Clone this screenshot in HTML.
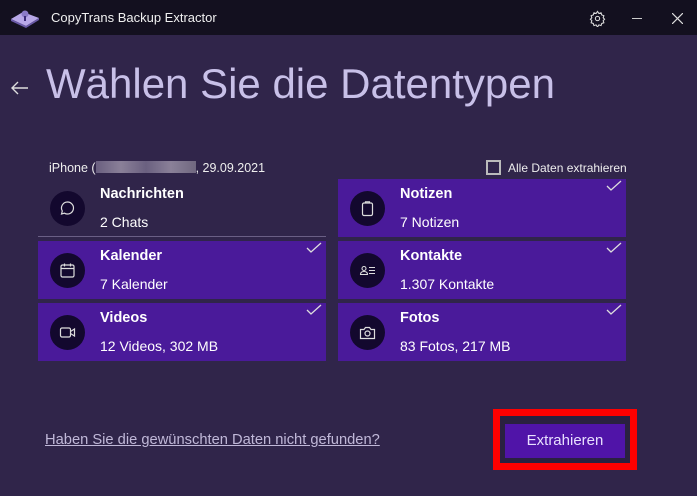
<!DOCTYPE html>
<html><head><style>
*{margin:0;padding:0;box-sizing:border-box}
body{width:697px;height:496px;background:#30254a;font-family:"Liberation Sans","DejaVu Sans",sans-serif;position:relative;overflow:hidden;color:#fff}
.tb{position:absolute;left:0;top:0;width:697px;height:35px;background:#13101f}
.abs{position:absolute}
.card{position:absolute;width:288px;height:58px;background:#4a1a9a}
.card.un{background:transparent;border-bottom:1px solid #6a5f85}
.ic{position:absolute;left:12px;top:12px;width:35px;height:35px;border-radius:50%;background:#13082e}
.ic svg{position:absolute;left:9px;top:9px}
.t{position:absolute;left:62px;top:7px;font-weight:bold;font-size:14.5px}
.s{position:absolute;left:62px;top:35px;font-size:14px}
.ck{position:absolute;right:4px;top:1px}
</style></head><body>
<div class="tb">
<svg class="abs" style="left:9px;top:8px" width="32" height="20" viewBox="0 0 32 20"><path d="M2 11 L14 4 L30 10 L17 18 Z" fill="#b8a8e8"/><path d="M2 11 L17 18 L30 10 L30 12 L17 20 L2 13Z" fill="#6a5aa8"/><circle cx="16" cy="6" r="3.5" fill="#8a7ac8"/><rect x="15" y="8" width="2" height="5" fill="#3a2a78"/></svg>
<div class="abs" style="left:51px;top:10px;font-size:13px;color:#f0f0f0">CopyTrans Backup Extractor</div>
<svg class="abs" style="left:589px;top:10px" width="17" height="17" viewBox="0 0 24 24" fill="none" stroke="#ddd" stroke-width="1.5"><circle cx="12" cy="12" r="3"/><path d="M12 2l2 3 3-1 1 3 3 1-1 3 2 2-2 2 1 3-3 1-1 3-3-1-2 3-2-3-3 1-1-3-3-1 1-3-2-2 2-2-1-3 3-1 1-3 3 1z"/></svg>
<div class="abs" style="left:632px;top:18px;width:10px;height:1px;background:#ccc"></div>
<svg class="abs" style="left:672px;top:13px" width="11" height="11" viewBox="0 0 11 11" stroke="#ddd" stroke-width="1.2"><path d="M0 0L11 11M11 0L0 11"/></svg>
</div>
<svg class="abs" style="left:11px;top:81px" width="18" height="14" viewBox="0 0 18 14" fill="none" stroke="#ddd" stroke-width="1.4"><path d="M17 7H1M7 1L1 7l6 6"/></svg>
<div class="abs" style="left:46px;top:60px;font-size:42px;color:#c8c0e8">Wählen Sie die Datentypen</div>
<div class="abs" style="left:49px;top:161px;font-size:12.5px;color:#eee">iPhone (<span style="display:inline-block;width:100px;height:12px;background:linear-gradient(90deg,#6a5f80,#8a8098,#6a6080,#8a8098,#706880);vertical-align:-1px"></span>, 29.09.2021</div>
<div class="abs" style="left:486px;top:160px;width:15px;height:15px;border:2px solid #bbb"></div>
<div class="abs" style="left:508px;top:161px;font-size:12px;color:#eee">Alle Daten extrahieren</div>

<div class="card un" style="left:38px;top:179px"><div class="ic"><svg width="17" height="17" viewBox="0 0 17 17" fill="none" stroke="#ddd" stroke-width="1.2"><path d="M8.5 2a6 6 0 1 1-3 11.2L2.5 14l.8-3A6 6 0 0 1 8.5 2z"/></svg></div><div class="t">Nachrichten</div><div class="s">2 Chats</div></div>
<div class="card" style="left:38px;top:241px"><div class="ic"><svg width="17" height="17" viewBox="0 0 17 17" fill="none" stroke="#ddd" stroke-width="1.2"><rect x="2" y="3" width="13" height="12" rx="1.5"/><path d="M2 6.5h13M5.5 1.5v3M11.5 1.5v3"/></svg></div><div class="t">Kalender</div><div class="s">7 Kalender</div><svg class="ck" width="16" height="12" viewBox="0 0 16 12" fill="none" stroke="#ddd" stroke-width="1.3"><path d="M1 6l4 4 10-9"/></svg></div>
<div class="card" style="left:38px;top:303px"><div class="ic"><svg width="17" height="17" viewBox="0 0 17 17" fill="none" stroke="#ddd" stroke-width="1.2"><rect x="1.5" y="4" width="10" height="9" rx="1.5"/><path d="M11.5 7.5l4-2.5v7l-4-2.5"/></svg></div><div class="t">Videos</div><div class="s">12 Videos, 302 MB</div><svg class="ck" width="16" height="12" viewBox="0 0 16 12" fill="none" stroke="#ddd" stroke-width="1.3"><path d="M1 6l4 4 10-9"/></svg></div>

<div class="card" style="left:338px;top:179px"><div class="ic"><svg width="17" height="17" viewBox="0 0 17 17" fill="none" stroke="#ddd" stroke-width="1.2"><rect x="3.5" y="3" width="10" height="12.5" rx="1.5"/><path d="M6.5 3V1.8h4V3"/></svg></div><div class="t">Notizen</div><div class="s">7 Notizen</div><svg class="ck" width="16" height="12" viewBox="0 0 16 12" fill="none" stroke="#ddd" stroke-width="1.3"><path d="M1 6l4 4 10-9"/></svg></div>
<div class="card" style="left:338px;top:241px"><div class="ic"><svg width="17" height="17" viewBox="0 0 17 17" fill="none" stroke="#ddd" stroke-width="1.1"><circle cx="5" cy="6.5" r="2"/><path d="M1.5 12.5c0-2 1.5-3 3.5-3s3.5 1 3.5 3zM10 5.5h6M10 8.5h6M10 11.5h6"/></svg></div><div class="t">Kontakte</div><div class="s">1.307 Kontakte</div><svg class="ck" width="16" height="12" viewBox="0 0 16 12" fill="none" stroke="#ddd" stroke-width="1.3"><path d="M1 6l4 4 10-9"/></svg></div>
<div class="card" style="left:338px;top:303px"><div class="ic"><svg width="17" height="17" viewBox="0 0 17 17" fill="none" stroke="#ddd" stroke-width="1.2"><path d="M1.5 5.5h3.5l1.5-2h4l1.5 2h3.5v9h-14z"/><circle cx="8.5" cy="9.5" r="2.5"/></svg></div><div class="t">Fotos</div><div class="s">83 Fotos, 217 MB</div><svg class="ck" width="16" height="12" viewBox="0 0 16 12" fill="none" stroke="#ddd" stroke-width="1.3"><path d="M1 6l4 4 10-9"/></svg></div>

<div class="abs" style="left:45px;top:432px;font-size:14.7px;color:#c0b8d8;text-decoration:underline">Haben Sie die gewünschten Daten nicht gefunden?</div>
<div class="abs" style="left:493px;top:409px;width:144px;height:61px;border:7px solid #ff0000;background:#2a2140"></div>
<div class="abs" style="left:505px;top:424px;width:120px;height:34px;background:#5014a8;color:#e8e0ff;font-size:15px;text-align:center;line-height:34px">Extrahieren</div>
</body></html>
